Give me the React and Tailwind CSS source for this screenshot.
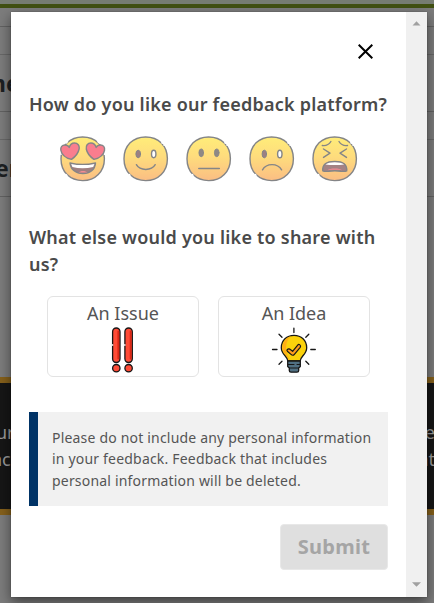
import React from "react";

function Face({ children, gaps = true }) {
  return (
    <svg viewBox="0 0 46 46" className="h-[46px] w-[46px] shrink-0 opacity-[0.58]" fill="none" stroke="#2c2e32" strokeWidth="1.4" strokeLinecap="round" strokeLinejoin="round">
      <defs>
        <linearGradient id="faceFill" x1="0" y1="0" x2="0" y2="1">
          <stop offset="0" stopColor="#ffe01a" />
          <stop offset="0.45" stopColor="#fec420" />
          <stop offset="1" stopColor="#f88f2b" />
        </linearGradient>
      </defs>
      <path d="M22.600 1C29.300 1 34.400 3 38.300 6.900C42.300 10.800 44.400 16.200 44.400 22.800C44.400 29.300 42.300 34.600 38.300 38.500C34.300 42.500 29.200 44.600 22.700 44.600C16.200 44.600 11 42.500 7 38.600C3 34.700 1 29.300 1 22.800C1 16.200 3.100 10.800 7.100 6.800C11 3 16 1 22.600 1Z" fill="url(#faceFill)" />
      {gaps ? (
        <path d="M38.900 6.700l.4 .4M41 8.900l.2 .3M6.300 38.500l.6 .7" stroke="#fff" strokeWidth="1.600" />
      ) : (
        <path d="M6.200 6.800l1.200-1.200M38 5.700l1.400 1.300M1 17v1.200M44.500 17v1.200M5.900 38.600l.9 .9" stroke="#fff" strokeWidth="1.700" />
      )}
      {children}
    </svg>
  );
}

function LoveFace() {
  return (
    <Face gaps={false}>
      <g fill="#f5203e">
        <path d="M11.500 23.400C6 22 1.700 18.700 .9 14.300C.3 11 2.200 9 4.900 9C6.900 9 8.500 9.900 9.300 11.400C10 8.700 11.800 7 14.500 7C17.800 7 19.700 9.700 19.100 13C18.400 17 15.500 20.500 11.500 23.400Z" />
        <path d="M33.900 23.400C39.400 22 43.700 18.700 44.500 14.300C45.100 11 43.200 9 40.500 9C38.500 9 36.900 9.900 36.100 11.400C35.400 8.700 33.600 7 30.900 7C27.600 7 25.700 9.700 26.300 13C27 17 29.900 20.500 33.900 23.400Z" />
      </g>
      <path d="M10 27C18 29 27 29 35.500 27C35 33.700 30 37.600 23 37.600C16 37.600 10.600 33.700 10 27Z" fill="#5d2527" />
      <path d="M11.200 27.900C18 29.500 27.500 29.500 34.400 27.900L33.200 31C26 32.600 19 32.600 12.400 31Z" fill="#fff" stroke="none" />
      <path d="M18.500 36.600C20.500 34.400 25.500 34.400 27.500 36.600" fill="#ee3a45" stroke="none" />
    </Face>
  );
}

function SmileFace() {
  return (
    <Face>
      <ellipse cx="15.200" cy="18" rx="2.300" ry="3.700" fill="#55262a" strokeWidth="1" />
      <ellipse cx="30.700" cy="18" rx="2.200" ry="3.700" fill="#fff" />
      <path d="M13.400 28.700C17 35 28.500 35 32.200 28.700" />
    </Face>
  );
}

function NeutralFace() {
  return (
    <Face>
      <g fill="#40342f" strokeWidth=".8">
        <ellipse cx="15.200" cy="16.800" rx="2.300" ry="3.900" />
        <ellipse cx="30.700" cy="16.800" rx="2.300" ry="3.900" />
      </g>
      <path d="M12.800 32.600H33.300" strokeWidth="1.500" />
    </Face>
  );
}

function SadFace() {
  return (
    <Face>
      <ellipse cx="15.300" cy="18" rx="2.200" ry="3.800" fill="#55262a" strokeWidth="1" />
      <ellipse cx="30.800" cy="18" rx="2.200" ry="3.800" fill="#fff" />
      <path d="M13.500 33.800C17.500 26.900 28.500 26.900 32.600 33.800" />
    </Face>
  );
}

function WearyFace() {
  return (
    <Face>
      <path d="M10.300 9.500C14 10 17 8.500 18.900 5.500M27 5.500C29 8.700 32 10 35.500 9.500M11.500 13L18 17.200L11.500 21.400M34.500 13L28 17.200L34.500 21.400" />
      <path d="M10.800 34.900C10.200 28.500 14 25.500 22.800 25.500C31.500 25.500 35.200 28.500 34.700 34.900C31 36.200 29.500 34.800 22.800 34.800C16 34.800 14.500 36.200 10.800 34.900Z" fill="#63292d" />
      <path d="M13.500 28.500C17 25.600 28.500 25.600 32.100 28.500C27 29.300 18.500 29.300 13.500 28.500Z" fill="#fff" stroke="none" />
      <path d="M15.500 34.200C17.500 31.800 28 31.800 30 34.200C25 33.700 20.500 33.700 15.500 34.200Z" fill="#ed3547" stroke="none" />
    </Face>
  );
}

function IssueIcon() {
  return (
    <svg viewBox="0 0 46 46" className="h-[46px] w-[46px]" stroke="#171717" strokeWidth="1.300">
      <g fill="#ff4b36">
        <rect x="12.600" y="1" width="7.400" height="34.500" rx="3.700" />
        <rect x="24.900" y="1" width="7.400" height="34.500" rx="3.700" />
        <circle cx="16.300" cy="41.200" r="3.700" />
        <circle cx="28.600" cy="41.200" r="3.700" />
      </g>
      <path d="M18.300 4.500V31.500M30.600 4.500V31.500" stroke="#dc2615" strokeWidth="1.800" strokeLinecap="round" />
      <path d="M12.500 17.200V18.700M24.800 17.200V18.700" stroke="#fff" strokeWidth="1.500" />
    </svg>
  );
}

function IdeaIcon() {
  return (
    <svg viewBox="0 0 46 46" className="h-[46px] w-[46px]" fill="none" stroke="#171717" strokeWidth="1.300" strokeLinejoin="round" strokeLinecap="round">
      <path d="M22.900 1.200V5.600M8 7.200L11 10.200M37.800 7.200L34.800 10.200M1.500 22.500H6M39.800 22.500H44.300M8 37.300L11 34.300M37.800 37.300L34.800 34.300" />
      <path d="M16.800 34C16.800 29.500 10.300 27.500 10.300 20.700C10.300 13.500 15.800 8.300 23 8.300C30.200 8.300 35.700 13.500 35.700 20.700C35.700 27.500 29.200 29.500 29.200 34Z" fill="#fbd20b" />
      <path d="M12.700 15.500C14.300 11.800 17 9.900 20 9.300C14.500 14.500 13 22 18.500 33H17.800C17 29 11.300 27 11.300 20.700C11.300 18.500 11.800 17 12.700 15.500Z" fill="#ffae15" stroke="none" />
      <path d="M16.700 34H29.300V39.500L27.700 41V43.500C27.700 44.600 26.900 45.200 26 45.200H20C19 45.200 18.300 44.600 18.300 43.500V41L16.700 39.500Z" fill="#507083" />
      <path d="M17 37.500H23M26 37.500H29M18.500 41H27.500" strokeWidth="1.100" />
      <path d="M16.200 22.700C17.300 21.300 18.600 21.700 19.700 22.800L21.600 24.400L26.500 18.300C28 16.500 30.500 18.300 29.200 20.300L23.400 27.300C22.300 28.600 21.200 28.500 20 27.400L16.600 24.500C16 24 15.800 23.200 16.200 22.700Z" fill="#ff9c1b" strokeWidth="1.200" />
    </svg>
  );
}

function Page() {
  return (
    <div className="h-full bg-[#7c7c7c] text-[#1d2022]">
      <div className="h-1 bg-[#777d73]" />
      <div className="h-1 bg-[#415012]" />
      <div className="h-[19px] border-b border-[#626262]" />
      <div className="h-7 border-b border-[#686868]" />
      <div className="flex h-[57px] items-center border-b border-[#626262]">
        <span className="-ml-[9px] text-[23px] font-bold leading-none">ne</span>
      </div>
      <div className="h-7 border-b border-[#686868]" />
      <div className="flex h-[57px] items-center border-b border-[#626262]">
        <span className="-ml-[5px] text-[23px] font-bold leading-none">er</span>
      </div>
      <div className="mt-[180px] flex h-[138px] justify-between border-y-[6px] border-[#85601b] bg-[#161616] pt-[36px] text-[18px] leading-[27px] text-[#9a9a9a]">
        <div className="-ml-[4px]"><div>ur</div><div className="-ml-[5px]">nc</div></div>
        <div className="-mr-[1px] text-right"><div>e</div><div>nt</div></div>
      </div>
    </div>
  );
}

function Choice({ label, children }) {
  return (
    <button className="flex h-[80.5px] w-[152px] flex-col items-center rounded-[6px] border border-[#e3e3e3] bg-white pt-[3px] text-[18px] leading-[27px] text-[#555]">
      <span>{label}</span>
      {children}
    </button>
  );
}

export default function App() {
  return (
    <div className="relative h-[603px] w-[434px] overflow-hidden font-['Noto_Sans',sans-serif]">
      <Page />
      <div className="absolute left-[11px] top-[11.5px] flex h-[585px] w-[416px] bg-white text-[#4a4a4a] shadow-[0_5px_12px_rgba(0,0,0,0.5),0_0_1px_rgba(0,0,0,0.4)]">
        <main className="flex w-[395px] flex-col px-[18px] pt-[0.5px]">
          <div className="flex h-[79px] justify-end pr-[15px] pt-[32px]">
            <svg viewBox="0 0 15 15" className="h-[15px] w-[15px]" stroke="#000" strokeWidth="2">
              <path d="M.7 .7L14.300 14.300M14.300 .7L.7 14.300" />
            </svg>
          </div>
          <h2 className="whitespace-nowrap text-[18px] font-semibold leading-[27px] tracking-[0.22px]">How do you like our feedback platform?</h2>
          <div className="mt-[18px] flex gap-[17px] pl-[31px]">
            <LoveFace /><SmileFace /><NeutralFace /><SadFace /><WearyFace />
          </div>
          <h2 className="mt-[42px] text-[18px] font-semibold leading-[27px] tracking-[0.22px]">What else would you like to share with us?</h2>
          <div className="mt-[18px] flex justify-center gap-[19px]">
            <Choice label="An Issue"><IssueIcon /></Choice>
            <Choice label="An Idea"><IdeaIcon /></Choice>
          </div>
          <div className="mt-[35.5px] h-[94px] whitespace-nowrap border-l-[9px] border-[#003366] bg-[#f1f1f1] pl-[14px] pt-[14.5px] text-[14px] leading-[21.5px] tracking-[0.19px] text-[#555]">
            Please do not include any personal information<br />in your feedback. Feedback that includes<br />personal information will be deleted.
          </div>
          <button className="mt-[18px] h-[45.5px] w-[108px] self-end rounded-[4px] border border-[#e8e8e8] bg-[#dfdfdf] text-[20px] font-bold tracking-[0.3px] text-[#a5a5a5]">Submit</button>
        </main>
        <div className="flex w-[21px] flex-col items-center justify-between bg-[#f0f0f0] pb-[9.5px] pt-[9px]">
          <svg viewBox="0 0 9 5" className="h-[5px] w-[9px]" fill="#a0a0a0"><path d="M4.500 .3L8.500 4.500H.5Z" /></svg>
          <svg viewBox="0 0 9 5" className="h-[5px] w-[9px]" fill="#a0a0a0"><path d="M4.500 4.700L0 .3H9Z" /></svg>
        </div>
      </div>
    </div>
  );
}
